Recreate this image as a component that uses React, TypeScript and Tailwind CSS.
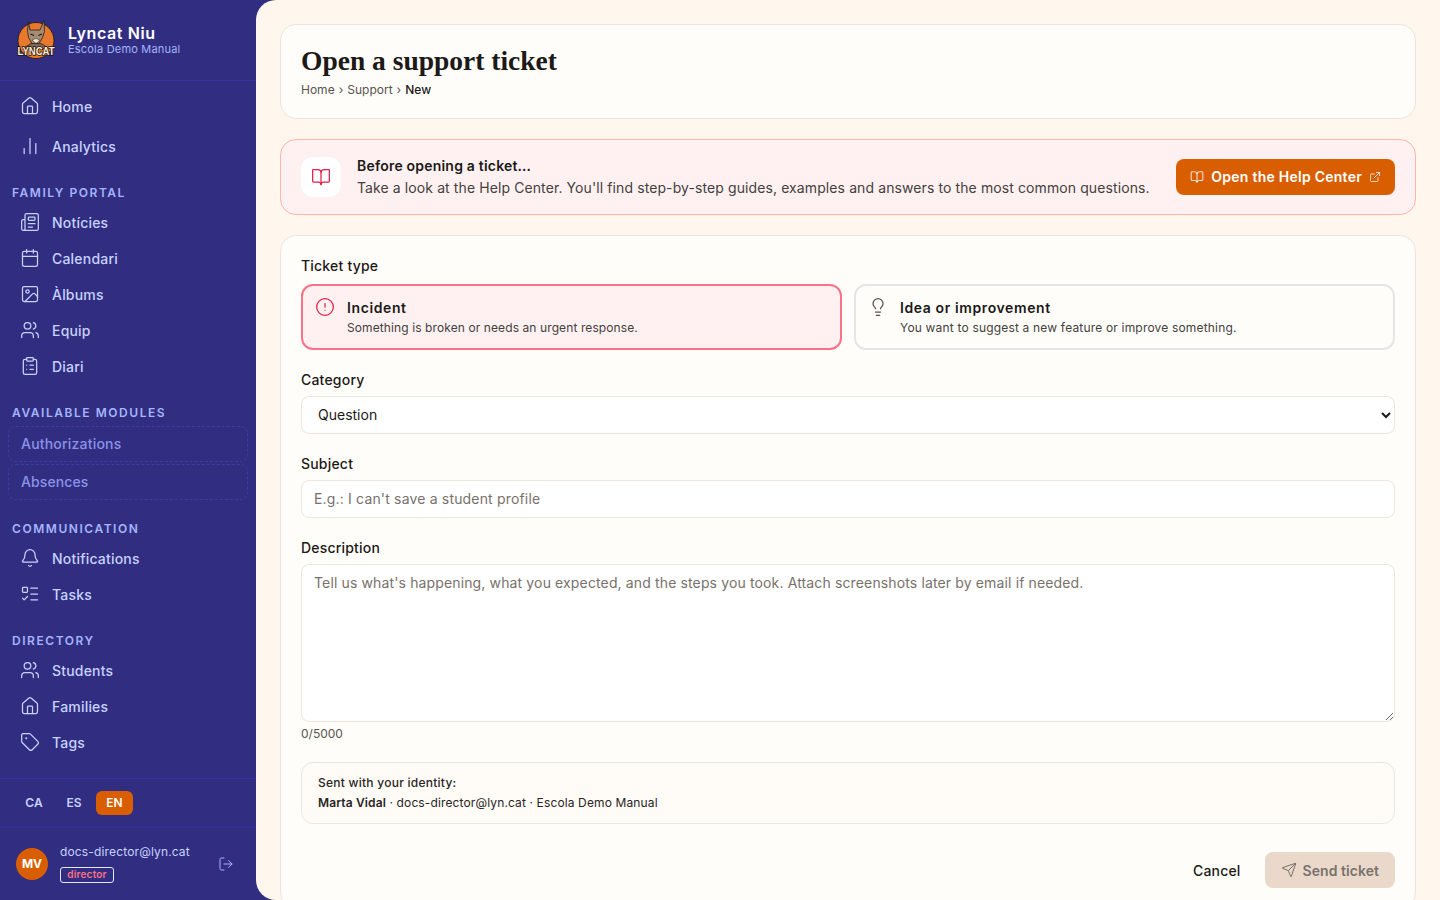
import React from 'react';
import {
  House,
  ChartNoAxesColumn,
  Newspaper,
  Calendar,
  Image,
  Users,
  ClipboardList,
  Bell,
  ListTodo,
  Tag,
  LogOut,
  BookOpen,
  ExternalLink,
  CircleAlert,
  Lightbulb,
  Send,
} from 'lucide-react';

const NavItem = ({ icon: Icon, label, tall }: { icon: React.ElementType; label: string; tall?: boolean }) => (
  <a className={`flex items-center gap-3 px-3 text-[14px] font-medium tracking-[0.2px] text-[#c7d2fe] ${tall ? 'h-10' : 'h-9'}`}>
    <Icon className="h-5 w-5 shrink-0" strokeWidth={1.5} />
    <span>{label}</span>
  </a>
);

const SectionTitle = ({ children, className }: { children: React.ReactNode; className: string }) => (
  <div className={`px-1 text-[12px] leading-[16px] font-semibold tracking-[1.55px] text-[#a5b4fc] ${className}`}>
    {children}
  </div>
);

const Logo = () => (
  <svg viewBox="0 0 40 40" className="h-10 w-10 shrink-0 overflow-visible">
    <circle cx="20" cy="20.5" r="18" fill="#e8792c" stroke="#1f1410" strokeWidth="0.8" />
    {/* ears and head */}
    <path
      d="M12.5 1.5l1.5 8.5h10l4-9.5 0.5 11-2 6-3.5 6h-7l-3.5-6-1-7z"
      fill="#a58a74"
      stroke="#2a1c16"
      strokeWidth="0.8"
      strokeLinejoin="round"
    />
    <path d="M14.5 14l3.5 1.5M26 14l-3.5 1.5" stroke="#1f1410" strokeWidth="1.2" />
    <path d="M16 20l4 3.5 4-3.5-4-1.5z" fill="#f5e6d3" stroke="#2a1c16" strokeWidth="0.5" />
    {/* shoulders */}
    <path d="M9 27l6-3.5h10l6 3.5v1.5H9z" fill="#7c6656" stroke="#2a1c16" strokeWidth="0.7" />
    <text
      x="20"
      y="35"
      textAnchor="middle"
      fontFamily="'Liberation Sans', sans-serif"
      fontSize="10.5"
      fontWeight="700"
      fill="#fdeed7"
      stroke="#1f1410"
      strokeWidth="1.5"
      paintOrder="stroke"
      textLength="37"
      lengthAdjust="spacingAndGlyphs"
    >
      LYNCAT
    </text>
  </svg>
);

const Sidebar = () => (
  <aside className="flex h-screen w-[256px] shrink-0 flex-col bg-[#312e81] pr-0">
    <div className="flex h-[81px] shrink-0 items-center gap-3 border-b border-[#3730a3] px-4">
      <Logo />
      <div className="pb-[2px]">
        <div className="text-[16px] leading-[20px] font-semibold tracking-[0.6px] text-white">Lyncat Niu</div>
        <div className="-mt-px text-[11px] leading-[14px] tracking-[0.2px] text-[#a5b4fc]">Escola Demo Manual</div>
      </div>
    </div>
    <nav className="flex-1 px-2 pt-[5px]">
      <NavItem icon={House} label="Home" tall />
      <NavItem icon={ChartNoAxesColumn} label="Analytics" tall />
      <SectionTitle className="mt-[19px] mb-[3px]">FAMILY PORTAL</SectionTitle>
      <NavItem icon={Newspaper} label="Notícies" />
      <NavItem icon={Calendar} label="Calendari" />
      <NavItem icon={Image} label="Àlbums" />
      <NavItem icon={Users} label="Equip" />
      <NavItem icon={ClipboardList} label="Diari" />
      <SectionTitle className="mt-[21px] mb-[5px]">AVAILABLE MODULES</SectionTitle>
      <div className="flex flex-col gap-[2px]">
        <div className="flex h-9 items-center rounded-lg border border-dashed border-[#3f3aa8] px-3 pb-[2px] text-[14px] font-medium tracking-[0.2px] text-[#8b93e6]">
          Authorizations
        </div>
        <div className="flex h-9 items-center rounded-lg border border-dashed border-[#3f3aa8] px-3 pb-[2px] text-[14px] font-medium tracking-[0.1px] text-[#8b93e6]">
          Absences
        </div>
      </div>
      <SectionTitle className="mt-[21px] mb-[3px]">COMMUNICATION</SectionTitle>
      <NavItem icon={Bell} label="Notifications" />
      <NavItem icon={ListTodo} label="Tasks" />
      <SectionTitle className="mt-[21px] mb-[3px]">DIRECTORY</SectionTitle>
      <NavItem icon={Users} label="Students" />
      <NavItem icon={House} label="Families" />
      <NavItem icon={Tag} label="Tags" />
    </nav>
    <div className="flex h-[49px] shrink-0 items-center gap-1 border-t border-[#3730a3] px-4">
      <span className="w-9 text-center text-[12px] font-semibold text-[#c7d2fe]">CA</span>
      <span className="w-9 text-center text-[12px] font-semibold text-[#c7d2fe]">ES</span>
      <span className="flex h-6 w-[37px] items-center justify-center rounded-md bg-[#d95e00] text-[12px] font-semibold text-white">
        EN
      </span>
    </div>
    <div className="flex h-[73px] shrink-0 items-center gap-3 border-t border-[#3730a3] px-4">
      <div className="flex h-8 w-8 shrink-0 items-center justify-center rounded-full bg-[#d95e00] text-[12px] font-bold text-white">
        MV
      </div>
      <div className="min-w-0 flex-1 pb-[2px]">
        <div className="text-[12px] leading-[16px] tracking-[0.15px] text-[#c7d2fe]">docs-director@lyn.cat</div>
        <div className="mt-[7px] flex h-[16px] w-[54px] items-center justify-center rounded-[3px] border border-[#e0e7ff] text-[10px] font-semibold tracking-[0.2px] text-[#fb7185]">
          director
        </div>
      </div>
      <LogOut className="mr-[6px] h-4 w-4 text-[#a5b4fc]" strokeWidth={1.5} />
    </div>
  </aside>
);

const Label = ({ children, className }: { children: React.ReactNode; className?: string }) => (
  <label className={`block text-[14px] leading-[20px] font-medium tracking-[0.2px] text-[#1c1917] ${className ?? 'mb-[6px]'}`}>
    {children}
  </label>
);

const App = () => {
  return (
    <div className="flex h-screen overflow-hidden bg-[#312e81] font-['Inter',sans-serif]">
      <Sidebar />
      <main className="h-screen min-w-0 flex-1 overflow-hidden rounded-l-[20px] bg-[#fff7ed] p-6">
        {/* Page title */}
        <div className="rounded-2xl border border-[#e9e4de] bg-[#fffdfa] px-5 pt-[19px] pb-[20px]">
          <h1 className="font-['Liberation_Serif',serif] text-[27.5px] leading-[34px] font-bold text-[#1c1917]">
            Open a support ticket
          </h1>
          <div className="mt-[4px] flex items-center gap-1 text-[12px] leading-[16px] text-[#57534e]">
            <span>Home</span>
            <span>›</span>
            <span>Support</span>
            <span>›</span>
            <span className="font-medium text-[#1c1917]">New</span>
          </div>
        </div>

        {/* Help center banner */}
        <div className="mt-5 flex h-[76px] items-center gap-4 rounded-2xl border border-[#fdb5aa] bg-[#fff1f2] px-5">
          <div className="flex h-10 w-10 shrink-0 items-center justify-center rounded-xl bg-white">
            <BookOpen className="h-5 w-5 text-[#e11d48]" strokeWidth={1.5} />
          </div>
          <div className="min-w-0 flex-1">
            <div className="text-[14px] leading-[20px] font-semibold tracking-[0.2px] text-[#1c1917]">
              Before opening a ticket…
            </div>
            <div className="mt-[2px] text-[14px] leading-[20px] tracking-[0.1px] whitespace-nowrap text-[#44403c]">
              Take a look at the Help Center. You'll find step-by-step guides, examples and answers to the most common
              questions.
            </div>
          </div>
          <a className="flex h-9 shrink-0 items-center gap-[7px] rounded-lg bg-[#d95e00] px-[14px] pb-[1px] text-[14px] font-semibold tracking-[0.25px] text-white">
            <BookOpen className="h-[14px] w-[14px]" strokeWidth={1.5} />
            Open the Help Center
            <ExternalLink className="h-3 w-3" strokeWidth={1.5} />
          </a>
        </div>

        {/* Form */}
        <div className="mt-5 rounded-2xl border border-[#e9e4de] bg-[#fffdfa] px-5 pt-5 pb-5">
          <Label className="mb-2">Ticket type</Label>
          <div className="grid grid-cols-2 gap-3">
            <div className="flex h-[66px] gap-3 rounded-xl border-2 border-[#fb7185] bg-[#fff1f2] px-3 pt-[12px]">
              <CircleAlert className="mt-[-1px] h-5 w-5 shrink-0 text-[#e11d48]" strokeWidth={1.5} />
              <div>
                <div className="text-[14px] leading-[20px] font-semibold tracking-[0.6px] text-[#1c1917]">Incident</div>
                <div className="mt-px text-[12px] leading-[18px] tracking-[0.1px] text-[#44403c]">
                  Something is broken or needs an urgent response.
                </div>
              </div>
            </div>
            <div className="flex h-[66px] gap-3 rounded-xl border-2 border-[#e7e5e4] px-3 pt-[12px]">
              <Lightbulb className="mt-[-1px] h-5 w-5 shrink-0 text-[#57534e]" strokeWidth={1.5} />
              <div>
                <div className="text-[14px] leading-[20px] font-semibold tracking-[0.6px] text-[#1c1917]">
                  Idea or improvement
                </div>
                <div className="mt-px text-[12px] leading-[18px] tracking-[0.18px] text-[#44403c]">
                  You want to suggest a new feature or improve something.
                </div>
              </div>
            </div>
          </div>

          <div className="mt-[20px]">
            <Label>Category</Label>
            <select
              defaultValue="Question"
              className="h-[38px] w-full rounded-lg border border-[#ece6df] bg-white px-3 pb-[2px] text-[14px] text-[#1c1917]"
            >
              <option>Question</option>
            </select>
          </div>

          <div className="mt-[20px]">
            <Label>Subject</Label>
            <input
              placeholder="E.g.: I can't save a student profile"
              className="h-[38px] w-full rounded-lg border border-[#ece6df] bg-white px-3 pb-[2px] text-[14px] tracking-[0.17px] placeholder:text-[#78716c]"
            />
          </div>

          <div className="mt-[20px]">
            <Label>Description</Label>
            <textarea
              placeholder="Tell us what's happening, what you expected, and the steps you took. Attach screenshots later by email if needed."
              className="block h-[158px] w-full rounded-lg border border-[#ece6df] bg-white px-3 py-2 text-[14px] leading-[20px] tracking-[0.135px] placeholder:text-[#78716c]"
            />
            <div className="mt-[3px] text-[12px] leading-[18px] text-[#57534e]">0/5000</div>
          </div>

          <div className="mt-[19px] h-[62px] rounded-xl border border-[#ebe6e0] bg-[#fffbf7] px-4 pt-[10px] text-[12px] leading-[20px] text-[#292524]">
            <div className="font-medium tracking-[0.25px]">Sent with your identity:</div>
            <div className="tracking-[0.13px]">
              <span className="font-semibold">Marta Vidal</span> · docs-director@lyn.cat · Escola Demo Manual
            </div>
          </div>

          <div className="mt-7 flex items-center justify-end gap-6">
            <button className="text-[14px] font-medium tracking-[0.2px] text-[#1c1917]">Cancel</button>
            <button className="flex h-9 items-center gap-[6px] rounded-lg bg-[#ead9cb] px-4 text-[14px] font-semibold tracking-[0.05px] text-[#78716c]">
              <Send className="h-4 w-4" strokeWidth={1.5} />
              Send ticket
            </button>
          </div>
        </div>
      </main>
    </div>
  );
};

export default App;
